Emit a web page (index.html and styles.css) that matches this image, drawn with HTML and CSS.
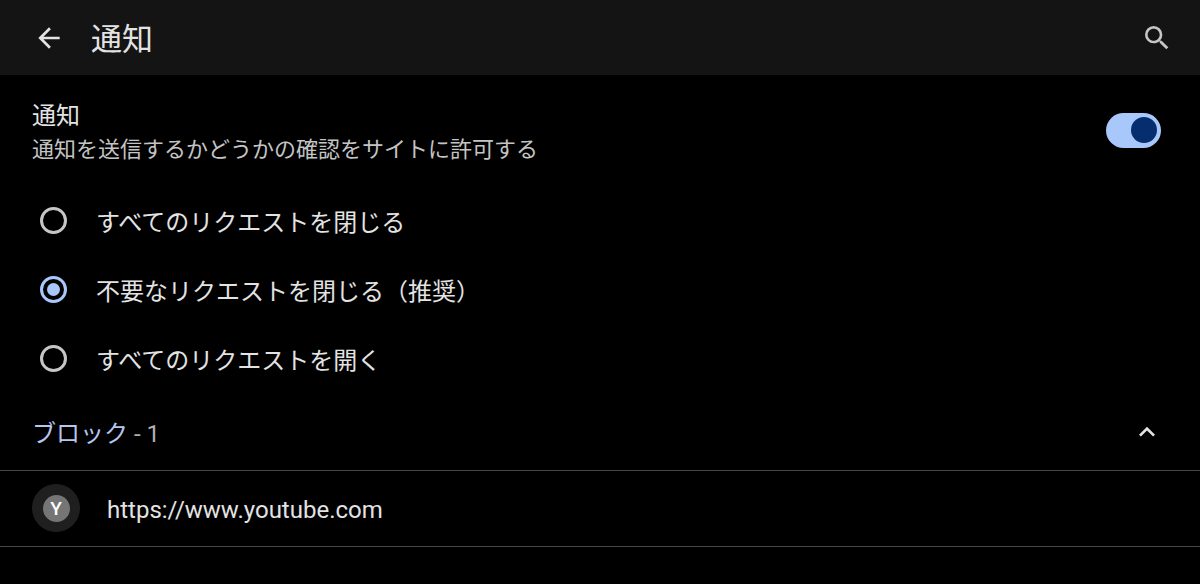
FILE: index.html
```html
<!DOCTYPE html>
<html lang="ja">
<head>
<meta charset="utf-8">
<meta name="viewport" content="width=device-width, initial-scale=1">
<title>通知</title>
<link rel="stylesheet" href="styles.css">
</head>
<body>
<header class="toolbar">
  <button class="icon-button" type="button" aria-label="戻る">
    <svg class="icon" viewBox="0 0 24 24" aria-hidden="true"><path d="M20 11H7.83l5.59-5.59L12 4l-8 8 8 8 1.41-1.41L7.83 13H20v-2z"/></svg>
  </button>
  <h1 class="toolbar-title">通知</h1>
  <button class="icon-button icon-button-muted" type="button" aria-label="検索">
    <svg class="icon" viewBox="0 0 24 24" aria-hidden="true"><path d="M15.5 14h-.79l-.28-.27A6.47 6.47 0 0 0 16 9.5 6.5 6.5 0 1 0 9.5 16c1.61 0 3.09-.59 4.23-1.57l.27.28v.79l5 4.99L20.49 19l-4.99-5zm-6 0C7.01 14 5 11.99 5 9.5S7.01 5 9.5 5 14 7.01 14 9.5 11.99 14 9.5 14z"/></svg>
  </button>
</header>
<main>
  <label class="setting" for="notifications">
    <span class="setting-text">
      <span class="setting-title">通知</span>
      <span class="setting-summary">通知を送信するかどうかの確認をサイトに許可する</span>
    </span>
    <input class="switch" type="checkbox" role="switch" id="notifications" checked>
  </label>
  <div class="options" role="radiogroup" aria-label="通知">
    <label class="option"><input class="radio" type="radio" name="mode"><span class="option-text">すべてのリクエストを閉じる</span></label>
    <label class="option"><input class="radio" type="radio" name="mode" checked><span class="option-text">不要なリクエストを閉じる（推奨）</span></label>
    <label class="option"><input class="radio" type="radio" name="mode"><span class="option-text">すべてのリクエストを開く</span></label>
  </div>
  <button class="group" type="button" aria-expanded="true">
    <span class="group-text"><span class="group-name">ブロック</span> - 1</span>
    <svg class="icon" viewBox="0 0 24 24" aria-hidden="true"><path d="M12 8l-6 6 1.41 1.41L12 10.83l4.59 4.58L18 14z"/></svg>
  </button>
  <a class="site" href="#youtube">
    <span class="site-badge"><span class="site-letter">Y</span></span>
    <span class="site-url">https://www.youtube.com</span>
  </a>
</main>
</body>
</html>
```
FILE: styles.css
```css
* {
  box-sizing: border-box;
}

body {
  margin: 0;
  background: #000;
  color: #e3e3e3;
  font-family: Roboto, "Noto Sans CJK JP", sans-serif;
  font-size: 24px;
  line-height: 34px;
}

button {
  padding: 0;
  border: 0;
  background: none;
  color: inherit;
  font: inherit;
  text-align: left;
}

.icon {
  display: block;
  flex: none;
  width: 32px;
  height: 32px;
  fill: currentColor;
}

.toolbar {
  display: flex;
  align-items: center;
  padding: 16px 27px 16px 33px;
  background: #141414;
}

.icon-button-muted {
  color: #c8c6c4;
}

.toolbar-title {
  flex: 1;
  margin: 0 0 0 26px;
  padding-top: 4px;
  font-size: 31px;
  font-weight: 400;
  line-height: 39px;
}

.setting {
  display: flex;
  align-items: center;
  justify-content: space-between;
  padding: 18px 39px 19px 32px;
}

.setting-text {
  display: flex;
  flex-direction: column;
  padding-top: 6px;
}

.setting-summary {
  color: #c4c4c4;
  font-size: 22px;
}

.switch {
  appearance: none;
  display: flex;
  align-items: center;
  flex: none;
  width: 55px;
  height: 35px;
  margin: 0;
  padding: 0 4px;
  border-radius: 18px;
  background: #474747;
}

.switch::before {
  content: "";
  width: 26px;
  height: 26px;
  border-radius: 50%;
  background: #c7c7c7;
}

.switch:checked {
  justify-content: flex-end;
  background: #a8c7fa;
}

.switch:checked::before {
  background: #062e6f;
}

.option {
  display: flex;
  align-items: center;
  gap: 29px;
  min-height: 69px;
  padding: 0 40px;
}

.option-text,
.group-text,
.site-url {
  padding-top: 4px;
}

.radio {
  appearance: none;
  display: grid;
  place-items: center;
  flex: none;
  width: 27px;
  height: 27px;
  margin: 0;
  border: 3px solid #c8c6c4;
  border-radius: 50%;
}

.radio:checked {
  border-color: #a8c7fa;
}

.radio:checked::before {
  content: "";
  width: 13px;
  height: 13px;
  border-radius: 50%;
  background: #a8c7fa;
}

.group {
  display: flex;
  align-items: center;
  justify-content: space-between;
  width: 100%;
  min-height: 78px;
  padding: 0 37px 0 32px;
  border-bottom: 1px solid #474747;
}

.group-text {
  color: #b0b0b0;
}

.group-name {
  color: #b8c5f0;
}

.site {
  display: flex;
  align-items: center;
  gap: 27px;
  padding: 13px 32px 14px;
  border-bottom: 1px solid #474747;
  color: inherit;
  text-decoration: none;
}

.site-badge {
  display: grid;
  place-items: center;
  flex: none;
  width: 48px;
  height: 48px;
  border-radius: 50%;
  background: #1f1f1f;
}

.site-letter {
  width: 27px;
  height: 27px;
  border-radius: 50%;
  background: #757575;
  color: #fff;
  font-size: 19px;
  font-weight: 500;
  line-height: 27px;
  text-align: center;
}
```
